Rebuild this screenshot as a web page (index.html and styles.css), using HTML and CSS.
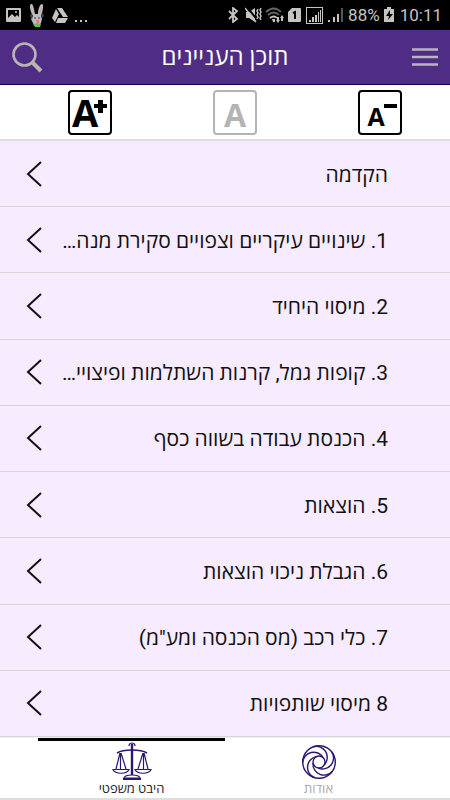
FILE: index.html
```html
<!DOCTYPE html>
<html lang="he" dir="rtl">
<head>
  <meta charset="UTF-8">
  <meta name="viewport" content="width=device-width, initial-scale=1.0">
  <title>תוכן העניינים</title>
  <link rel="stylesheet" href="styles.css">
</head>
<body>
  <!-- Status bar -->
  <div class="status-bar" dir="ltr">
    <div class="status-group">
      <svg width="16" height="15" viewBox="0 0 16 15"><path fill="#c4c4c4" fill-rule="evenodd" d="M1 0h13q1 0 1 1v12q0 1-1 1H1q-1 0-1-1V1q0-1 1-1zM2 2v8l4-4 3 3 2-2 2 2V2z"/><circle cx="10" cy="4" r="1" fill="#c4c4c4"/></svg>
      <svg width="16" height="23" viewBox="0 0 16 23">
        <path fill="#b9bcc0" d="M4 12C1 7 0 1 2 0s3 5 4 10h3c0-5 2-10 4-10s1 7-1 12l1 3-1 4-2 3H5l-1-3-2-4z"/>
        <path fill="#e39aa4" d="M2 2l3 7-2-2zM13 2l-3 7 3-3z"/>
        <path fill="#444" d="M2 9l2 3-1 3-2-3zM13 9l2 2-1 3-2-1z"/>
        <circle cx="6" cy="14" r="1" fill="#667"/><circle cx="10" cy="14" r="1" fill="#667"/>
        <path fill="#e56b91" d="M7 16h3v3H8z"/>
        <path fill="#6fbf35" d="M5 20l3-1 4 1-1 3H6z"/>
      </svg>
      <svg width="16" height="15" viewBox="0 0 16 15"><path fill="#c4c4c4" d="M5 0h5l6 9h-5zM4 1l3 5-4 8-3-4zM6 10h10l-3 5H4z"/></svg>
      <svg width="14" height="15" viewBox="0 0 14 15"><path fill="#c4c4c4" d="M0 12h2v2H0zM5 12h2v2H5zM10 12h2v2h-2z"/></svg>
    </div>
    <div class="status-group status-right">
      <svg class="bluetooth" width="11" height="16" viewBox="0 0 11 16"><path fill="none" stroke="#c4c4c4" stroke-width="1.8" d="M1 4l8 8-4 3V1l4 3-8 8"/></svg>
      <svg width="17" height="16" viewBox="0 0 17 16"><path fill="#c4c4c4" d="M1 5h3l6-4v14l-6-4H1z"/><path stroke="#000" stroke-width="2" d="M2 0l11 14"/><path fill="none" stroke="#c4c4c4" stroke-width="1.5" d="M0 1l11 14M13 2l-1 2 1 2-1 2 1 2-1 2M16 1l-1 2 1 2-1 2 1 2-1 2 1 2"/></svg>
      <svg width="20" height="16" viewBox="0 0 20 16"><g fill="none" stroke="#666" stroke-width="1.7"><path d="M1 5q8-7 15 0"/><path d="M3 8q6-5 11 0"/></g><path fill="none" stroke="#c4c4c4" stroke-width="1.7" d="M5 11q4-3 7 0"/><path fill="#c4c4c4" d="M7 12h3v3H8zM12 10h2v3h1l-2 3-2-3h1zM18 14h-2v-3h-1l2-3 2 3h-1z"/></svg>
      <svg width="14" height="16" viewBox="0 0 14 16"><path fill="#c4c4c4" d="M4 1h8q1 0 1 1v12q0 1-1 1H1q-1 0-1-1V5z"/><path fill="none" stroke="#000" stroke-width="2" d="M5 6l2-1v7"/></svg>
      <svg width="20" height="18" viewBox="0 0 20 18"><rect x="1.500" y="1.500" width="16" height="16" fill="none" stroke="#c4c4c4"/><path fill="#c4c4c4" d="M4 14h2v2H4zM7 11h2v5H7zM10 9h2v7h-2zM13 6h1v10h-1zM15 4h1v12h-1z"/></svg>
      <svg width="17" height="16" viewBox="0 0 17 16"><path fill="#c4c4c4" d="M0 13h2v2H0zM5 10h2v5H5zM9 7h2v8H9z"/><path fill="#555" d="M13 1h2v14h-2z"/></svg>
      <span>88%</span>
      <svg width="12" height="16" viewBox="0 0 12 16"><path fill="#c4c4c4" d="M4 0h4v2h3v13H1V2h3z"/><path fill="#000" d="M7 3L3 9h3l-1 4 5-6H7z"/></svg>
      <span class="clock">10:11</span>
    </div>
  </div>

  <header class="header">
    <button class="icon-btn" aria-label="תפריט">
      <svg width="26" height="20" viewBox="0 0 26 20"><path stroke="#b9b5bf" stroke-width="2.400" d="M0 2.500h26M0 10h26M0 17.500h26"/></svg>
    </button>
    <h1>תוכן העניינים</h1>
    <button class="icon-btn" aria-label="חיפוש">
      <svg width="32" height="32" viewBox="0 0 32 32"><circle cx="12.500" cy="13.500" r="11" fill="none" stroke="#b9b5b5" stroke-width="2.600"/><path stroke="#b9b5b5" stroke-width="4" d="M19.500 20.500L29 30"/></svg>
    </button>
  </header>

  <!-- Text size -->
  <div class="size-bar">
    <button class="size-btn small" aria-label="הקטנת טקסט">A<svg width="13" height="4" viewBox="0 0 13 4"><path fill="#000" d="M0 0h13v4H0z"/></svg></button>
    <button class="size-btn normal" aria-label="טקסט רגיל">A</button>
    <button class="size-btn large" aria-label="הגדלת טקסט">A<svg width="13" height="13" viewBox="0 0 13 13"><path fill="#000" d="M4 0h5v4h4v4H9v5H4V8H0V4h4z"/></svg></button>
  </div>

  <!-- Contents -->
  <main class="list">
    <a class="row" href="#"><span>הקדמה</span><svg class="arrow" viewBox="0 0 16 26"><path d="M15 1L2 13l13 12"/></svg></a>
    <a class="row" href="#"><span>1. שינויים עיקריים וצפויים סקירת מנה…</span><svg class="arrow" viewBox="0 0 16 26"><path d="M15 1L2 13l13 12"/></svg></a>
    <a class="row" href="#"><span>2. מיסוי היחיד</span><svg class="arrow" viewBox="0 0 16 26"><path d="M15 1L2 13l13 12"/></svg></a>
    <a class="row" href="#"><span>3. קופות גמל, קרנות השתלמות ופיצויי…</span><svg class="arrow" viewBox="0 0 16 26"><path d="M15 1L2 13l13 12"/></svg></a>
    <a class="row" href="#"><span>4. הכנסת עבודה בשווה כסף</span><svg class="arrow" viewBox="0 0 16 26"><path d="M15 1L2 13l13 12"/></svg></a>
    <a class="row" href="#"><span>5. הוצאות</span><svg class="arrow" viewBox="0 0 16 26"><path d="M15 1L2 13l13 12"/></svg></a>
    <a class="row" href="#"><span>6. הגבלת ניכוי הוצאות</span><svg class="arrow" viewBox="0 0 16 26"><path d="M15 1L2 13l13 12"/></svg></a>
    <a class="row" href="#"><span>7. כלי רכב (מס הכנסה ומע"מ)</span><svg class="arrow" viewBox="0 0 16 26"><path d="M15 1L2 13l13 12"/></svg></a>
    <a class="row" href="#"><span>8 מיסוי שותפויות</span><svg class="arrow" viewBox="0 0 16 26"><path d="M15 1L2 13l13 12"/></svg></a>
  </main>

  <nav class="nav-bar">
    <a class="tab" href="#">
      <svg width="36" height="39" viewBox="-18 -21 36 39">
        <g fill="none" stroke="#2c1672" stroke-width="1.400">
          <circle r="16.300"/>
          <circle r="6"/>
          <path d="M-3-16A11 11 0 0 1 5 3.500" transform="rotate(-10)"/>
          <path d="M-3-16A11 11 0 0 1 5 3.500" transform="rotate(62)"/>
          <path d="M-3-16A11 11 0 0 1 5 3.500" transform="rotate(134)"/>
          <path d="M-3-16A11 11 0 0 1 5 3.500" transform="rotate(206)"/>
          <path d="M-3-16A11 11 0 0 1 5 3.500" transform="rotate(278)"/>
        </g>
      </svg>
      <span>אודות</span>
    </a>
    <a class="tab active" href="#">
      <svg width="40" height="39" viewBox="0 0 40 39">
        <g fill="none" stroke="#2c1672" stroke-width="1.200">
          <path d="M17 5C17 1 23 1 23 5"/>
          <path stroke-width="2.400" d="M20 3v31"/>
          <path stroke-width="1.600" d="M5 12C10 9 15 9 20 9s10 0 15 3"/>
          <path d="M8 12L4 28M8.500 12v16M9 12l5 16M31 12l-5 16M31.500 12v16M32 12l4 16"/>
          <path d="M1 28.500h16c-2 5-14 5-16 0zM23 28.500h16c-2 5-14 5-16 0z"/>
          <path d="M12 37c1-4 15-4 16 0z"/>
          <path stroke-width="2" d="M11 38h18"/>
        </g>
      </svg>
      <span>היבט משפטי</span>
    </a>
  </nav>
</body>
</html>
```

FILE: styles.css
```css
/* General styles */
* {
  margin: 0;
  padding: 0;
  box-sizing: border-box;
}
body {
  display: flex;
  flex-direction: column;
  min-height: 100vh;
  font-family: Roboto, "Open Sans", "Noto Sans", sans-serif;
  background-color: #fff;
  color: #111;
}
a {
  color: inherit;
  text-decoration: none;
}
button {
  background: none;
  border: none;
  cursor: pointer;
}
svg {
  display: block;
  flex: none;
}

/* Status bar */
.status-bar {
  display: flex;
  align-items: center;
  justify-content: space-between;
  height: 30px;
  padding: 0 8px 0 6px;
  background-color: #000;
  color: #c4c4c4;
  font-size: 17px;
}
.status-group {
  display: flex;
  align-items: center;
  gap: 7px;
}
.status-right {
  gap: 3px;
}
.status-right .bluetooth {
  margin-right: 3px;
}
.status-right .clock {
  margin-left: 2px;
}

/* Header */
.header {
  display: flex;
  align-items: center;
  justify-content: space-between;
  height: 55px;
  padding: 0 12px;
  background-color: #502d84;
  border-bottom: 1px solid #0a0058;
}
.header h1 {
  color: #fff;
  font-size: 24px;
  font-weight: normal;
  line-height: 32px;
}
.icon-btn {
  display: flex;
  width: 32px;
}

/* Text size buttons */
.size-bar {
  display: flex;
  align-items: center;
  justify-content: space-between;
  height: 56px;
  padding: 0 48px 0 68px;
  border-bottom: 2px solid #ddd;
}
.size-btn {
  position: relative;
  width: 44px;
  height: 45px;
  border: 2px solid #000;
  border-radius: 4px;
  color: #000;
  font-family: "Open Sans", sans-serif;
  font-weight: bold;
  line-height: 1;
}
.size-btn svg {
  position: absolute;
  top: 12px;
  right: 3px;
}
.size-btn.large {
  padding-right: 10px;
  font-size: 38px;
}
.size-btn.large svg {
  top: 8px;
}
.size-btn.normal {
  padding-top: 6px;
  border-color: #b4b4b4;
  color: #b4b4b4;
  font-size: 32px;
}
.size-btn.small {
  padding-top: 8px;
  padding-right: 8px;
  font-size: 25px;
}

/* Contents list */
.list {
  display: flex;
  flex: 1;
  flex-direction: column;
  background-color: #f7ebff;
}
.row {
  display: flex;
  flex: 1;
  align-items: center;
  justify-content: space-between;
  min-height: 66px;
  padding: 0 62px 0 26px;
  border-bottom: 1px solid #d6d6d6;
  font-size: 21px;
  white-space: nowrap;
}
.arrow {
  width: 16px;
  height: 26px;
  fill: none;
  stroke: #111;
  stroke-width: 2;
}

/* Bottom tabs */
.nav-bar {
  display: flex;
  padding: 0 38px;
  border-top: 1px solid #eee;
  border-bottom: 2px solid #ddd;
}
.tab {
  display: flex;
  flex: 1;
  flex-direction: column;
  align-items: center;
  height: 60px;
  border-top: 3px solid transparent;
  color: #aaa;
  font-size: 13px;
  line-height: 18px;
}
.tab.active {
  border-color: #000;
  color: #222;
}
```
